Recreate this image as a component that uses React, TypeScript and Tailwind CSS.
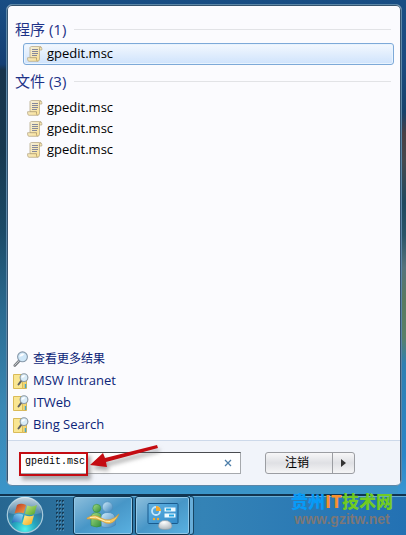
import React from 'react';

const files = ['gpedit.msc', 'gpedit.msc', 'gpedit.msc'];
const searchLinks = ['MSW Intranet', 'ITWeb', 'Bing Search'];

const ScriptIcon = () => (
    <svg viewBox="0 0 16 16" className="size-4 shrink-0" aria-hidden="true">
        <defs>
            <linearGradient id="paper" x1="0" y1="0" x2="1" y2="1">
                <stop offset="0" stopColor="#f3f0e4" />
                <stop offset="1" stopColor="#fbdf88" />
            </linearGradient>
        </defs>
        <path d="M3 1.5 Q3.5 .5 4.5 .5 H12.5 Q14.8 .5 14.8 2.5 V4 H12.5 V13 Q12.5 15.3 10.5 15.3 H2 Q.6 15.3 .6 13 V11.7 H3 Z" fill="url(#paper)" stroke="#b9ab8a" strokeWidth=".8" />
        <path d="M12.5 4 V2.5 Q12.5 .8 13.7 .8 M3 11.7 H9.5 V13.5 Q9.7 15 10.5 15.2" fill="none" stroke="#a8956c" strokeWidth=".8" />
        <path d="M5 3.5 H11 M5 5.5 H11 M5 7.5 H11 M5 9.5 H10" stroke="#85889a" strokeWidth="1" />
    </svg>
);

const MagnifierIcon = () => (
    <svg viewBox="0 0 16 16" className="size-4 shrink-0" aria-hidden="true">
        <path d="M6.5 9.5 L1.8 14.5" stroke="#777b80" strokeWidth="2.6" strokeLinecap="round" />
        <path d="M6.3 9.5 L1.8 14.2" stroke="#c9cdd2" strokeWidth="1" strokeLinecap="round" />
        <circle cx="9.5" cy="5.8" r="4.9" fill="#cfe7f8" stroke="#8799aa" strokeWidth="1.1" />
        <path d="M6.3 5.8 A3.4 3.4 0 0 1 11.5 3 Q9.5 6 6.3 5.8" fill="#fff" opacity=".9" />
    </svg>
);

const FolderSearchIcon = () => (
    <svg viewBox="0 0 16 16" className="size-4 shrink-0" aria-hidden="true">
        <path d="M9 2.5 H13.5 V15.5 H6 V14.5 H9 Z" fill="#f1d674" stroke="#d8b85a" />
        <path d="M.5 1.5 H9.5 V15.5 H.5 Z" fill="#f9e693" stroke="#dabb58" />
        <path d="M12.5 11 V15" stroke="#49a6c9" strokeWidth="1.4" />
        <path d="M8.4 7.6 L5.5 11.5" stroke="#5d6063" strokeWidth="2" strokeLinecap="round" />
        <circle cx="11" cy="4.6" r="3.9" fill="#d9ecf8" stroke="#8b98a3" strokeWidth="1.1" />
        <path d="M8.5 4.7 A2.6 2.6 0 0 1 12.3 2.5 Q11 5 8.5 4.7" fill="#fff" />
    </svg>
);

const WindowsOrb = () => (
    <svg viewBox="0 0 38 38" className="size-[38px]" aria-hidden="true">
        <defs>
            <radialGradient id="orb" cx=".5" cy=".9" r=".9">
                <stop offset="0" stopColor="#4ff3ec" />
                <stop offset=".35" stopColor="#25a5bd" />
                <stop offset=".7" stopColor="#34739d" />
                <stop offset="1" stopColor="#6993ae" />
            </radialGradient>
            <linearGradient id="orbGloss" x1="0" y1="0" x2="0" y2="1">
                <stop offset="0" stopColor="#fff" stopOpacity=".6" />
                <stop offset="1" stopColor="#fff" stopOpacity=".1" />
            </linearGradient>
            <linearGradient id="flagRed" x1="0" y1="0" x2="1" y2="1">
                <stop offset="0" stopColor="#b9331d" />
                <stop offset="1" stopColor="#f5a04b" />
            </linearGradient>
            <linearGradient id="flagGreen" x1="0" y1="0" x2="1" y2="1">
                <stop offset="0" stopColor="#c8e879" />
                <stop offset="1" stopColor="#4ba22e" />
            </linearGradient>
            <linearGradient id="flagBlue" x1="0" y1="1" x2="1" y2="0">
                <stop offset="0" stopColor="#1c67b8" />
                <stop offset="1" stopColor="#98ddfa" />
            </linearGradient>
            <linearGradient id="flagYellow" x1="0" y1="0" x2="1" y2="1">
                <stop offset="0" stopColor="#fff29b" />
                <stop offset="1" stopColor="#f2a51a" />
            </linearGradient>
        </defs>
        <circle cx="19" cy="19" r="17.7" fill="url(#orb)" stroke="#a7cbdc" strokeWidth="1.2" />
        <path d="M3 17 A16 16 0 0 1 35 17 Q19 22 3 17" fill="url(#orbGloss)" />
        <path d="M11 9 Q15 6.5 20 9 L17.7 17.3 Q13 15.5 8.5 17.5 Z" fill="url(#flagRed)" />
        <path d="M21.2 9.6 Q26 11.5 31 9 L28.5 17.7 Q24 20 19 17.8 Z" fill="url(#flagGreen)" />
        <path d="M8 19 Q12.5 16.8 17.2 18.7 L15 27 Q10 25 5.7 27 Z" fill="url(#flagBlue)" />
        <path d="M18.6 19.2 Q23.5 21.5 28 19.2 L25.6 27.7 Q21 30.5 16.3 28 Z" fill="url(#flagYellow)" />
    </svg>
);

const MessengerIcon = () => (
    <svg viewBox="0 0 34 30" className="h-[30px] w-[34px]" aria-hidden="true">
        <defs>
            <linearGradient id="buddyGreen" x1="0" y1="0" x2="1" y2="1">
                <stop offset="0" stopColor="#a9df86" />
                <stop offset="1" stopColor="#2c8c38" />
            </linearGradient>
            <linearGradient id="buddyBlue" x1="0" y1="0" x2="1" y2="1">
                <stop offset="0" stopColor="#d1edfc" />
                <stop offset="1" stopColor="#3a82ba" />
            </linearGradient>
        </defs>
        <path d="M5 15 Q6 11.5 10.5 11.5 Q15 11.5 15.5 15 L16 24.5 Q11 27.5 5 24.5 Z" fill="url(#buddyGreen)" stroke="#358d45" strokeWidth=".6" />
        <circle cx="10.8" cy="7.3" r="4" fill="url(#buddyGreen)" stroke="#358d45" strokeWidth=".6" />
        <path d="M15 16 Q16 11.5 21.5 11.5 Q28 11.5 29 16 L29.5 24 Q22 28.5 15.5 25.5 Z" fill="url(#buddyBlue)" stroke="#4185b8" strokeWidth=".6" />
        <circle cx="21.5" cy="6" r="5.2" fill="url(#buddyBlue)" stroke="#508fbb" strokeWidth=".6" />
        <path d="M1 17 Q8 12.5 15 17 Q24 22.5 33 13 Q28 24.5 20 22 Q10 16.5 1 18 Z" fill="#f5c860" stroke="#d5942c" strokeWidth=".6" />
        <path d="M4 16.5 Q10 14.5 15 18.5 Q19 21 24 20.5" fill="none" stroke="#fff2b4" />
    </svg>
);

const ControlPanelIcon = () => (
    <svg viewBox="0 0 34 30" className="h-[30px] w-[34px]" aria-hidden="true">
        <defs>
            <linearGradient id="screen" x1="0" y1="0" x2="1" y2="1">
                <stop offset="0" stopColor="#62b2e2" />
                <stop offset="1" stopColor="#318bc9" />
            </linearGradient>
            <radialGradient id="mouse" cx=".4" cy=".2" r=".8">
                <stop offset="0" stopColor="#fff" />
                <stop offset="1" stopColor="#afb8be" />
            </radialGradient>
        </defs>
        <rect x="2" y="2.5" width="30" height="20" rx="1" fill="url(#screen)" stroke="#195b8e" />
        <circle cx="10" cy="10" r="4" fill="none" stroke="#c4e7fc" strokeWidth="1.8" />
        <path d="M10 10 V5 A5 5 0 0 1 15 10 Z" fill="#f5a92d" />
        <rect x="18.5" y="6.5" width="11" height="4" fill="#eefaff" />
        <rect x="20" y="7.5" width="5" height="2" fill="#24a7e3" />
        <rect x="18.5" y="12.5" width="11" height="4" fill="#eefaff" />
        <rect x="23" y="13.5" width="5" height="2" fill="#24a7e3" />
        <circle cx="8" cy="18" r="1.2" fill="#f5a92d" />
        <circle cx="12" cy="18" r="1.2" fill="#f5a92d" />
        <path d="M12.5 25 Q13 19.5 19 19.5 Q25 19.5 26 25 Q26 28.5 19 28.5 Q12.5 28.5 12.5 25" fill="url(#mouse)" stroke="#919ca5" strokeWidth=".6" />
    </svg>
);

const SectionTitle = ({ label, count }: { label: string; count: number }) => (
    <h2 className="flex h-6 items-center gap-2 pr-[2px] text-[15px] leading-6 text-[#1e3287]">
        <span>
            {label} ({count})
        </span>
        <span className="h-px flex-1 bg-[#e2e3e6]" />
    </h2>
);

const TaskButton = ({ label, className, children }: { label: string; className: string; children: React.ReactNode }) => (
    <button
        type="button"
        aria-label={label}
        className={`flex h-[39px] items-center justify-center rounded-[3px] border border-[#0e3551] bg-linear-to-br from-[#8dbfdc] via-[#4796c7] to-[#5ab1e1] shadow-[inset_0_0_0_1px_#91c8e8] ${className}`}
    >
        {children}
    </button>
);

export default function App() {
    return (
        <div className="flex min-h-screen flex-col bg-[linear-gradient(180deg,#194e84_0%,#1a4a80_12%,#17426b_21%,#4a3f44_25%,#45484e_30%,#1f485f_38%,#2a5468_44%,#55737c_50%,#5a7a60_56%,#5a8068_63%,#2f7fb2_68%,#2a86c8_85%,#3996d2_92%),linear-gradient(180deg,#194e84_0%,#153f73_12%,#17344d_13%,#17384f_28%,#1c4a66_43%,#2a6a90_58%,#3a88b4_76%,#3b95c9_92%)] bg-[size:8px_100%,100%_100%] bg-[position:right_top,left_top] bg-no-repeat font-['Open_Sans','Noto_Sans_CJK_SC',sans-serif] text-[13px] text-black">
            <main className="mt-1 mr-1 ml-[6px] flex flex-1 flex-col overflow-hidden rounded-md border border-[#5c87a8] bg-[#fbfbfe] shadow-[inset_0_0_0_1px_#35536e]">
                <section className="px-2 pt-3">
                    <SectionTitle label="程序" count={1} />
                    <button
                        type="button"
                        className="mt-[2px] ml-2 flex h-[22px] w-[calc(100%-7px)] items-center gap-1 rounded-[3px] border border-[#7da9d8] bg-linear-to-b from-[#f3f8fe] to-[#cfe3fc] px-[3px] text-left shadow-[inset_0_0_0_1px_#e8f3fe]"
                    >
                        <ScriptIcon />
                        <span>gpedit.msc</span>
                    </button>
                </section>
                <section className="px-2 pt-1">
                    <SectionTitle label="文件" count={3} />
                    <ul className="mt-1 ml-3">
                        {files.map((name, index) => (
                            <li key={index} className="flex h-[21px] items-center gap-1">
                                <ScriptIcon />
                                <span>{name}</span>
                            </li>
                        ))}
                    </ul>
                </section>

                <nav className="mt-auto mb-1 pl-[6px] text-[#0b2478]">
                    <a href="#more" className="flex h-[22px] items-center gap-1 text-[12px]">
                        <MagnifierIcon />
                        查看更多结果
                    </a>
                    {searchLinks.map((name) => (
                        <a key={name} href="#search" className="flex h-[22px] items-center gap-1">
                            <FolderSearchIcon />
                            {name}
                        </a>
                    ))}
                </nav>

                <footer className="mx-px flex h-[45px] items-start border-t border-[#cdd9ea] bg-[#f1f4fa] pt-[11px] pr-[45px] pl-3">
                    <div className="relative mr-6 flex h-[22px] flex-1 items-center border border-[#a6a9ad] border-t-[#4a4c50] bg-white">
                        <input
                            type="text"
                            aria-label="搜索程序和文件"
                            defaultValue="gpedit.msc"
                            className="h-5 w-full min-w-0 bg-transparent pb-1 pl-1 font-['Liberation_Mono',monospace] text-[10px] outline-none"
                        />
                        <button type="button" aria-label="清除" className="flex h-5 w-6 shrink-0 items-center justify-center">
                            <svg viewBox="0 0 8 8" className="size-2">
                                <path d="M1 1 L7 7 M7 1 L1 7" stroke="#4d7ea9" strokeWidth="1.3" />
                            </svg>
                        </button>
                        {/* callout frame and arrow */}
                        <span className="pointer-events-none absolute -top-px -left-[2px] h-6 w-[69px] border-2 border-[#c40c12] shadow-[3px_4px_4px_#77777799]" />
                        <svg viewBox="0 0 80 36" className="pointer-events-none absolute -top-2 left-[66px] h-9 w-20 drop-shadow-[2px_4px_2px_#66666688]">
                            <path d="M70 0 L71 3 L19 17 L20 22 L3 20 L16 8 L18 13 Z" fill="#c40c12" />
                        </svg>
                    </div>
                    <div className="flex h-[22px] rounded-[3px] border border-[#9b9da2] bg-linear-to-b from-[#f7f7f8] via-[#dfe0e4] to-[#f5f5f6] text-[12px]">
                        <button type="button" className="w-[67px] border-r border-[#9b9da2] pr-1">
                            注销
                        </button>
                        <button type="button" aria-label="更多选项" className="flex w-[21px] items-center justify-center">
                            <svg viewBox="0 0 5 8" className="h-2 w-[5px]">
                                <path d="M0 0 L5 4 L0 8 Z" fill="#333" />
                            </svg>
                        </button>
                    </div>
                </footer>
            </main>

            <div className="relative mt-2 flex h-[41px] items-start border-t-2 border-[#12344f] bg-linear-to-r from-[#276791] via-[#3483b6] to-[#2371b3] shadow-[inset_0_1px_0_#67aed6]">
                <button type="button" aria-label="开始" className="ml-[6px]">
                    <WindowsOrb />
                </button>
                <svg viewBox="0 0 9 31" className="mt-1 ml-3 h-[31px] w-[9px]" aria-hidden="true">
                    {[0, 4, 8, 12, 16, 20, 24, 28].map((y) => (
                        <g key={y}>
                            <path d={`M0 ${y + 1} h2 M3 ${y + 1} h2 M6 ${y + 1} h2`} stroke="#173d58" strokeWidth="2" />
                            <path d={`M1 ${y + 2} h1 M4 ${y + 2} h1 M7 ${y + 2} h1`} stroke="#7db4d3" />
                        </g>
                    ))}
                </svg>
                <TaskButton label="Messenger" className="ml-2 w-[60px]">
                    <MessengerIcon />
                </TaskButton>
                <TaskButton label="控制面板" className="ml-[2px] w-[55px]">
                    <ControlPanelIcon />
                </TaskButton>
                <span className="h-[39px] w-1 rounded-r-[3px] border-y border-r border-[#174563] bg-[#68aeda]" />
                {/* site mark laid over the wallpaper and taskbar */}
                <div className="absolute right-3 bottom-2 w-[104px] text-center whitespace-nowrap">
                    <p className="font-['Noto_Sans_CJK_SC',sans-serif] text-[17px] leading-5 font-black text-[#71cb23]">
                        <span className="text-[#079bf7]">贵州</span>
                        <span className="text-[#f7902e]">IT</span>技术网
                    </p>
                    <p className="font-['Liberation_Sans',sans-serif] text-[14px] leading-4 font-bold text-[#7b7777]">www.gzitw.net</p>
                </div>
            </div>
        </div>
    );
}
